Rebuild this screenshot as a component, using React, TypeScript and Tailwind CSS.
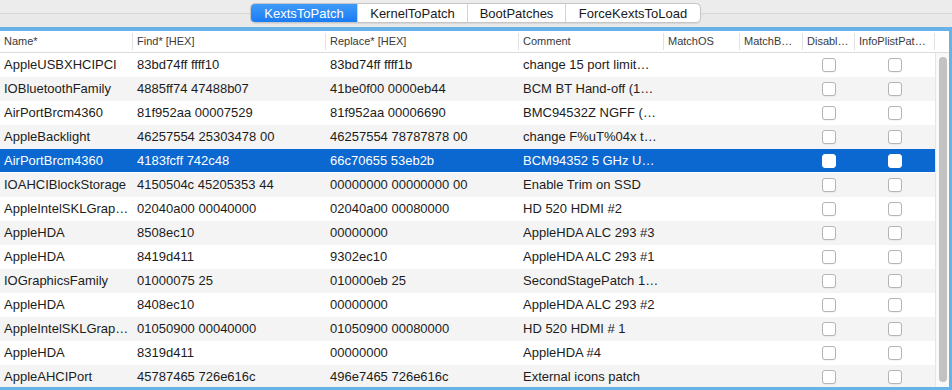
import React from "react";

type Row = [string, string, string, string];

const rows: Row[] = [
  ["AppleUSBXHCIPCI", "83bd74ff ffff10", "83bd74ff ffff1b", "change 15 port limit…"],
  ["IOBluetoothFamily", "4885ff74 47488b07", "41be0f00 0000eb44", "BCM BT Hand-off (1…"],
  ["AirPortBrcm4360", "81f952aa 00007529", "81f952aa 00006690", "BMC94532Z NGFF (…"],
  ["AppleBacklight", "46257554 25303478 00", "46257554 78787878 00", "change F%uT%04x t…"],
  ["AirPortBrcm4360", "4183fcff 742c48", "66c70655 53eb2b", "BCM94352 5 GHz U…"],
  ["IOAHCIBlockStorage", "4150504c 45205353 44", "00000000 00000000 00", "Enable Trim on SSD"],
  ["AppleIntelSKLGrap…", "02040a00 00040000", "02040a00 00080000", "HD 520 HDMI #2"],
  ["AppleHDA", "8508ec10", "00000000", "AppleHDA ALC 293 #3"],
  ["AppleHDA", "8419d411", "9302ec10", "AppleHDA ALC 293 #1"],
  ["IOGraphicsFamily", "01000075 25", "010000eb 25", "SecondStagePatch 1…"],
  ["AppleHDA", "8408ec10", "00000000", "AppleHDA ALC 293 #2"],
  ["AppleIntelSKLGrap…", "01050900 00040000", "01050900 00080000", "HD 520 HDMI # 1"],
  ["AppleHDA", "8319d411", "00000000", "AppleHDA #4"],
  ["AppleAHCIPort", "45787465 726e616c", "496e7465 726e616c", "External icons patch"],
];

const headers = [
  "Name*",
  "Find* [HEX]",
  "Replace* [HEX]",
  "Comment",
  "MatchOS",
  "MatchB…",
  "Disabl…",
  "InfoPlistPat…",
];

const GRID = "grid grid-cols-[133px_193px_193px_145px_76px_63px_52px_80px]";

function Checkbox({ selected }: { selected: boolean }) {
  return (
    <div
      className={
        selected
          ? "w-[14px] h-[14px] rounded-[3px] bg-white border border-white"
          : "w-[14px] h-[14px] rounded-[3px] bg-white border border-[#b4b4b4] shadow-[0_0.5px_0.5px_rgba(0,0,0,0.08)]"
      }
    />
  );
}

export default function App() {
  const tabs = [
    { label: "KextsToPatch", w: "w-[106px]", active: true },
    { label: "KernelToPatch", w: "w-[110px]", active: false },
    { label: "BootPatches", w: "w-[98px]", active: false },
    { label: "ForceKextsToLoad", w: "w-[135px]", active: false },
  ];
  return (
    <div
      className="w-[952px] h-[390px] overflow-hidden bg-[#ececec] flex flex-col"
      style={{ fontFamily: '"Liberation Sans", Arial, sans-serif' }}
    >
      {/* top tab bar */}
      <div className="h-[27px] shrink-0 pt-[3px] pl-[250px] bg-[linear-gradient(to_bottom,#ececec_13px,#d6d6d6_13px,#d6d6d6_14px,#e9e9e9_14px)]">
        <div className="flex h-[20px] w-fit rounded-[5px] border border-[#c6c6c6] bg-white overflow-hidden shadow-[0_0.5px_1px_rgba(0,0,0,0.08)]">
          {tabs.map((t, i) => (
            <div
              key={t.label}
              className={
                (t.active
                  ? "bg-[linear-gradient(to_bottom,#3f9af8,#1a7cf4)] text-white "
                  : "text-[#1a1a1a] ") +
                t.w +
                (i > 0 && !t.active ? " border-l border-[#d4d4d4]" : "") +
                " flex items-center justify-center text-[13px] leading-none"
              }
            >
              {t.label}
            </div>
          ))}
        </div>
      </div>

      {/* table frame */}
      <div className="flex-1 min-h-0 border-t-[4px] border-r-[3px] border-b-[3px] border-[#67b3e8] bg-white flex flex-col overflow-hidden">
        {/* header */}
        <div className="h-[22px] shrink-0 flex bg-white border-b border-[#dcdcdc]">
          <div className={GRID}>
            {headers.map((h) => (
              <div
                key={h}
                className="pl-[4px] flex items-center text-[11px] text-[#3a3a3a] border-r border-[#e2e2e2] my-[2px] whitespace-nowrap overflow-hidden"
              >
                {h}
              </div>
            ))}
          </div>
          <div className="flex-1" />
        </div>

        {/* body */}
        <div className="flex-1 min-h-0 flex overflow-hidden">
          <div className="w-[935px] shrink-0 flex flex-col">
            {rows.map((r, i) => {
              const selected = i === 4;
              const bg = selected
                ? "bg-[#0a68d0] text-white border-b border-white"
                : i % 2 === 0
                ? "bg-white text-[#1c1c1c]"
                : "bg-[#f4f4f4] text-[#1c1c1c]";
              return (
                <div key={i} className={GRID + " h-[24px] shrink-0 " + bg}>
                  {r.map((c, j) => (
                    <div
                      key={j}
                      className="pl-[4px] flex items-center text-[13px] whitespace-nowrap overflow-hidden"
                    >
                      {c}
                    </div>
                  ))}
                  <div />
                  <div />
                  <div className="flex items-center justify-center">
                    <Checkbox selected={selected} />
                  </div>
                  <div className="flex items-center justify-center">
                    <Checkbox selected={selected} />
                  </div>
                </div>
              );
            })}
          </div>
          {/* scrollbar */}
          <div className="flex-1 bg-[#f9f9f9] border-l border-[#e6e6e6] pt-[4px] pb-[5px] pl-[3px] pr-[2px]">
            <div className="w-[8px] h-full rounded-full bg-[#c2c2c2]" />
          </div>
        </div>
      </div>
    </div>
  );
}
